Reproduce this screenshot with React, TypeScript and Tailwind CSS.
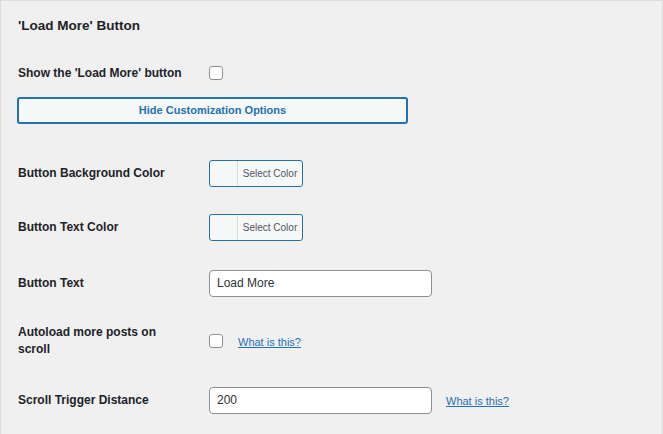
export default function App() {
  const label = "w-[208px] shrink-0 pl-[17px] text-[12px] font-bold text-[#1d2327] leading-[17px]";
  const swatch = (
    <div className="flex h-[27px] w-[94px] rounded-[3px] border border-[#2271b1] bg-[#f6f7f7] overflow-hidden">
      <div className="w-[28px] border-r border-[#dcdcde]" />
      <div className="flex-1 flex items-center justify-center text-[10px] text-[#50575e]">Select Color</div>
    </div>
  );
  const input = (v: string) => (
    <div className="h-[27px] w-[223px] rounded-[4px] border border-[#8c8f94] bg-white flex items-center px-[7px] text-[12px] text-[#2c3338]">{v}</div>
  );
  const cb = <div className="h-[14px] w-[14px] rounded-[3px] border border-[#8c8f94] bg-white" />;
  const link = <span className="text-[11px] text-[#2271b1] underline">What is this?</span>;
  return (
    <div className="w-[663px] h-[434px] bg-[#f0f0f1] border border-[#dcdcde] border-b-0 box-border" style={{ fontFamily: '"Liberation Sans", Arial, sans-serif' }}>
      <div className="pt-[15px] pl-[17px] text-[13.5px] font-bold text-[#1d2327] h-[56px]">'Load More' Button</div>
      <div className="flex items-center h-[32px]">
        <div className={label}>Show the 'Load More' button</div>
        {cb}
      </div>
      <div className="pl-[16px] pt-[8px] h-[60px]">
        <div className="h-[27px] w-[391px] rounded-[3px] border-2 border-[#2271b1] bg-[#f6f7f7] flex items-center justify-center text-[11px] font-semibold text-[#2271b1]">Hide Customization Options</div>
      </div>
      <div className="flex items-center h-[35px] mt-[7px]">
        <div className={label}>Button Background Color</div>{swatch}
      </div>
      <div className="flex items-center h-[28px] mt-[22px]">
        <div className={label}>Button Text Color</div>{swatch}
      </div>
      <div className="flex items-center h-[28px] mt-[28px]">
        <div className={label}>Button Text</div>{input("Load More")}
      </div>
      <div className="flex items-center h-[40px] mt-[24px]">
        <div className={label}>Autoload more posts on<br />scroll</div>
        {cb}<span className="ml-[15px]">{link}</span>
      </div>
      <div className="flex items-center h-[28px] mt-[25px]">
        <div className={label}>Scroll Trigger Distance</div>{input("200")}
        <span className="ml-[14px]">{link}</span>
      </div>
    </div>
  );
}
